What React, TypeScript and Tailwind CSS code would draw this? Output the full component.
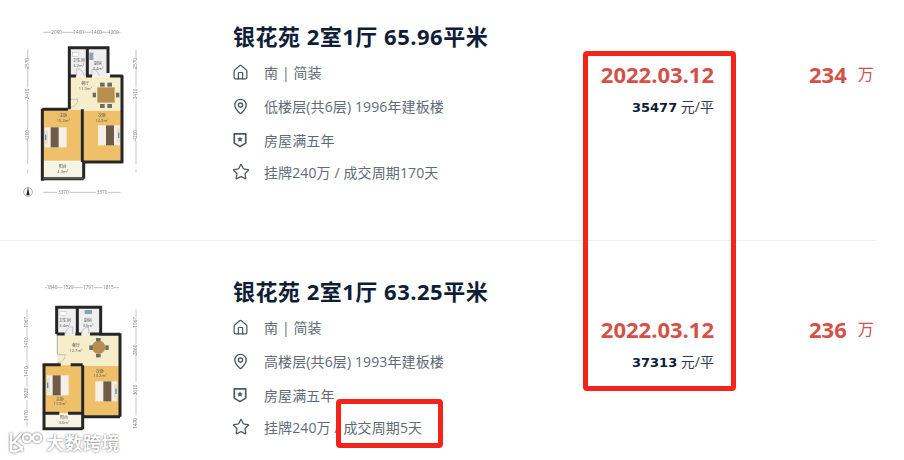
import { Home, MapPin, Star } from "lucide-react";

const SANS = "font-['Open_Sans','Noto_Sans_CJK_SC',sans-serif]";

const Shield = () => (
  <svg viewBox="0 0 16 16" className="size-4 text-[#4d5561]" fill="none">
    <path d="M2.300 1.800h11.400v9.300L8 14.600l-5.700-3.500Z" stroke="currentColor" strokeWidth="1.700" strokeLinejoin="round" />
    <path d="m8 4.500.9 1.800 2 .2-1.500 1.300.4 1.900L8 8.800l-1.800.9.400-1.900-1.500-1.300 2-.2Z" fill="currentColor" />
  </svg>
);

function DimLabel({ x, y, text, vertical }: { x: number; y: number; text: string; vertical?: boolean }) {
  return (
    <text
      x={x}
      y={y}
      fontSize="14"
      fill="#777"
      textAnchor="middle"
      dominantBaseline="middle"
      transform={vertical ? `rotate(-90 ${x} ${y})` : undefined}
    >
      {text}
    </text>
  );
}

function Bed({ x, y, flip }: { x: number; y: number; flip?: boolean }) {
  return (
    <g transform={`translate(${x} ${y})`}>
      <rect width="66" height="60" fill="#f4f0e8" />
      <rect x={flip ? 24 : 18} width="24" height="60" fill="#6f5c48" />
      <rect x={flip ? 56 : 0} y="8" width="10" height="44" fill="#e6e2da" />
      <rect x={flip ? 60 : 1} y="22" width="4" height="16" fill="#5f8fa8" />
    </g>
  );
}

function Table({ x, y }: { x: number; y: number }) {
  return (
    <g transform={`translate(${x} ${y})`}>
      <rect x="14" y="-14" width="14" height="12" fill="#6f6a62" />
      <rect x="36" y="-14" width="14" height="12" fill="#6f6a62" />
      <rect x="14" y="50" width="14" height="12" fill="#6f6a62" />
      <rect x="36" y="50" width="14" height="12" fill="#6f6a62" />
      <rect x="-8" y="16" width="10" height="14" fill="#6f6a62" />
      <rect x="62" y="16" width="10" height="14" fill="#6f6a62" />
      <rect x="6" width="52" height="46" fill="#b78f4e" />
    </g>
  );
}

function PlanA() {
  return (
    <svg viewBox="0 0 690 630" className="h-[210px] w-[230px] shrink-0 blur-[0.4px]">
      <path d="M130 67h22M186 67h36M250 67h26M304 67h26M350 67h12M130 547h42M208 547h80M324 547h38" stroke="#888" strokeWidth="1.500" />
      <path d="M83 118v30M83 172v60M83 270v90M83 392v70M83 480v8M408 118v30M408 172v60M408 270v90M408 392v70M408 480v8" stroke="#888" strokeWidth="1.500" />
      <DimLabel x={170} y={67} text="2090" />
      <DimLabel x={236} y={67} text="1400" />
      <DimLabel x={290} y={67} text="1400" />
      <DimLabel x={340} y={67} text="1200" />
      <DimLabel x={190} y={547} text="3370" />
      <DimLabel x={306} y={547} text="3370" />
      <DimLabel x={83} y={160} text="2570" vertical />
      <DimLabel x={83} y={252} text="2410" vertical />
      <DimLabel x={83} y={376} text="4200" vertical />
      <DimLabel x={408} y={160} text="2570" vertical />
      <DimLabel x={408} y={252} text="2410" vertical />
      <DimLabel x={408} y={376} text="4200" vertical />

      <rect x="208" y="115" width="116" height="85" fill="#efefef" />
      <path d="M210 200h157v102H210Z" fill="#f6eecb" />
      <path d="M127 300h120v152H127ZM252 302h114v154H252Z" fill="#eec06a" />
      <rect x="127" y="455" width="124" height="50" fill="#f6f4e2" />
      <rect x="218" y="128" width="18" height="12" fill="#fff" stroke="#999" />
      <rect x="268" y="128" width="12" height="22" fill="#8aa2ae" />
      <path d="M230 198v-22a22 22 0 0 1 22 22M276 198v-20a22 22 0 0 1 22 20M210 268h24a24 24 0 0 1-24 24" fill="none" stroke="#999" strokeWidth="1.500" />

      <path d="M208 198V113h54v85h-4M262 113h62v76M228 198h-20v-2M208 198v100M204 298h-77M127 296v212h6M127 506h124M251 506v-50M247 298v158M247 456h119M366 196v264M330 198h38M276 198h-14" fill="none" stroke="#262626" strokeWidth="9" />
      <path d="M130 506h120" stroke="#666" strokeWidth="3" />

      <Table x={286} y={232} />
      <Bed x={134} y={352} />
      <Bed x={294} y={346} flip />
      <text x="256" y="226" fontSize="12" fill="#555" textAnchor="middle">餐厅</text>
      <text x="256" y="241" fontSize="12" fill="#555" textAnchor="middle">11.9m²</text>
      <text x="236" y="156" fontSize="12" fill="#555" textAnchor="middle">卫生间</text>
      <text x="236" y="170" fontSize="12" fill="#555" textAnchor="middle">3.2m²</text>
      <text x="294" y="166" fontSize="12" fill="#555" textAnchor="middle">厨房</text>
      <text x="294" y="180" fontSize="12" fill="#555" textAnchor="middle">3.4m²</text>
      <text x="190" y="321" fontSize="12" fill="#555" textAnchor="middle">主卧</text>
      <text x="190" y="335" fontSize="12" fill="#555" textAnchor="middle">15.2m²</text>
      <text x="306" y="321" fontSize="12" fill="#555" textAnchor="middle">次卧</text>
      <text x="306" y="335" fontSize="12" fill="#555" textAnchor="middle">14.3m²</text>
      <text x="188" y="474" fontSize="12" fill="#555" textAnchor="middle">阳台</text>
      <text x="188" y="488" fontSize="12" fill="#555" textAnchor="middle">4.3m²</text>
      <circle cx="84" cy="546" r="13" fill="none" stroke="#555" strokeWidth="1.500" />
      <path d="M84 532 79 556h10Z" fill="#222" />
    </svg>
  );
}

function PlanB() {
  return (
    <svg viewBox="0 0 690 570" className="h-[190px] w-[230px] shrink-0 blur-[0.4px]">
      <DimLabel x={156} y={53} text="1840" />
      <DimLabel x={205} y={53} text="1529" />
      <DimLabel x={265} y={53} text="1791" />
      <DimLabel x={325} y={53} text="1815" />
      <path d="M135 53h6M172 53h16M222 53h26M282 53h26M342 53h15" stroke="#888" strokeWidth="1.500" />
      <path d="M81 118v24M81 172v30M81 232v60M81 320v30M81 390v34M81 450v20M408 118v24M408 172v50M408 256v80M408 376v60M408 450v20" stroke="#888" strokeWidth="1.500" />
      <DimLabel x={81} y={157} text="1967" vertical />
      <DimLabel x={81} y={218} text="1410" vertical />
      <DimLabel x={81} y={305} text="1410" vertical />
      <DimLabel x={81} y={370} text="3928" vertical />
      <DimLabel x={81} y={437} text="1470" vertical />
      <DimLabel x={408} y={157} text="1967" vertical />
      <DimLabel x={408} y={240} text="2860" vertical />
      <DimLabel x={408} y={360} text="3610" vertical />
      <DimLabel x={408} y={460} text="1470" vertical />

      <rect x="170" y="112" width="132" height="82" fill="#efefef" />
      <path d="M172 194h186v94H172Z" fill="#f6eecb" />
      <path d="M132 286h112v144H132ZM248 288h112v150H248Z" fill="#eec06a" />
      <rect x="132" y="430" width="116" height="46" fill="#f6f4e2" />
      <rect x="180" y="124" width="18" height="12" fill="#fff" stroke="#999" />
      <rect x="254" y="120" width="22" height="12" fill="#8aa2ae" />
      <path d="M196 192a22 22 0 0 1 22-22v22M244 192a20 20 0 0 1 22-20v20M172 254h24a24 24 0 0 1-24 24" fill="none" stroke="#999" strokeWidth="1.500" />

      <path d="M170 192v-80h62v78M232 112h70v76M170 192h24M226 192h6M232 192h12M270 192h32M302 188v5h58M360 190v250M360 440H248M248 286v192M248 476H132V284h50M212 284h36M132 430h46M204 430h44" fill="none" stroke="#262626" strokeWidth="9" />
      <path d="M172 194v58" stroke="#888" strokeWidth="2" />

      <circle cx="296" cy="232" r="20" fill="#b78f4e" />
      <rect x="288" y="204" width="14" height="10" fill="#6f6a62" />
      <rect x="288" y="252" width="14" height="10" fill="#6f6a62" />
      <rect x="268" y="226" width="10" height="14" fill="#6f6a62" />
      <rect x="316" y="226" width="10" height="14" fill="#6f6a62" />
      <Bed x={140} y={316} />
      <Bed x={286} y={334} flip />
      <text x="194" y="156" fontSize="12" fill="#555" textAnchor="middle">卫生间</text>
      <text x="194" y="170" fontSize="12" fill="#555" textAnchor="middle">3.4m²</text>
      <text x="264" y="156" fontSize="12" fill="#555" textAnchor="middle">厨房</text>
      <text x="264" y="170" fontSize="12" fill="#555" textAnchor="middle">3.5m²</text>
      <text x="228" y="232" fontSize="12" fill="#555" textAnchor="middle">餐厅</text>
      <text x="228" y="246" fontSize="12" fill="#555" textAnchor="middle">12.7m²</text>
      <text x="180" y="392" fontSize="12" fill="#555" textAnchor="middle">主卧</text>
      <text x="180" y="406" fontSize="12" fill="#555" textAnchor="middle">11.9m²</text>
      <text x="300" y="308" fontSize="12" fill="#555" textAnchor="middle">次卧</text>
      <text x="300" y="322" fontSize="12" fill="#555" textAnchor="middle">13.2m²</text>
      <text x="192" y="448" fontSize="12" fill="#555" textAnchor="middle">阳台</text>
      <text x="192" y="462" fontSize="12" fill="#555" textAnchor="middle">3.6m²</text>
    </svg>
  );
}

type Listing = {
  title: string;
  floor: string;
  deal: string;
  date: string;
  unit: string;
  price: string;
};

function Row({ item, plan, rowClass, planClass }: { item: Listing; plan: React.ReactNode; rowClass: string; planClass: string }) {
  const lines = [
    { icon: <Home className="size-[17px] text-[#4d5561]" strokeWidth={1.7} />, text: "南 | 简装", h: "h-[31px]" },
    { icon: <MapPin className="size-[17px] text-[#4d5561]" strokeWidth={1.9} />, text: item.floor, h: "h-[36px]" },
    { icon: <Shield />, text: "房屋满五年", h: "h-[32px]" },
    { icon: <Star className="size-[18px] text-[#4d5561]" strokeWidth={1.7} />, text: item.deal, h: "h-[32px]" },
  ];

  return (
    <div className={`flex w-[876px] ${rowClass}`}>
      <div className={planClass}>{plan}</div>
      <div className="ml-[3px] w-[340px] shrink-0">
        <h2 className="text-[22px] leading-[30px] font-bold tracking-[0.5px] whitespace-nowrap text-[#101d37]">{item.title}</h2>
        <div className="mt-[6px]">
          {lines.map((line) => (
            <div key={line.text} className={`flex items-center text-[14px] tracking-[0.12px] text-[#616a76] ${line.h}`}>
              <span className="-ml-[1px] flex w-[32px] shrink-0">{line.icon}</span>
              <span className="whitespace-nowrap">{line.text}</span>
            </div>
          ))}
        </div>
      </div>
      <div className="ml-[31px] flex w-[110px] shrink-0 flex-col items-end">
        <div className="mt-[39px] text-[22px] leading-[28px] font-bold whitespace-nowrap text-[#d2524a]">{item.date}</div>
        <div className="mt-[5px] text-[14px] leading-[28px] whitespace-nowrap text-[#2f3a4a]">
          <span className="font-['DejaVu_Sans','Noto_Sans_CJK_SC',sans-serif] text-[13px] font-bold text-[#101d37]">{item.unit}</span> 元/平
        </div>
      </div>
      <div className="mt-[39px] ml-[95px] flex h-[28px] shrink-0 items-center whitespace-nowrap text-[#d2524a]">
        <span className="text-[22px] font-bold">{item.price}</span>
        <span className="ml-[11px] text-[16px]">万</span>
      </div>
    </div>
  );
}

export default function App() {
  return (
    <div className={`relative h-[460px] w-[904px] overflow-hidden bg-white ${SANS}`}>
      <Row
        rowClass="h-[241px] border-b border-[#eeeeee] pt-[21px]"
        planClass="-mt-[11px]"
        plan={<PlanA />}
        item={{
          title: "银花苑 2室1厅 65.96平米",
          floor: "低楼层(共6层) 1996年建板楼",
          deal: "挂牌240万 / 成交周期170天",
          date: "2022.03.12",
          unit: "35477",
          price: "234",
        }}
      />
      <Row
        rowClass="pt-[35px]"
        planClass="-mt-[6px]"
        plan={<PlanB />}
        item={{
          title: "银花苑 2室1厅 63.25平米",
          floor: "高楼层(共6层) 1993年建板楼",
          deal: "挂牌240万 / 成交周期5天",
          date: "2022.03.12",
          unit: "37313",
          price: "236",
        }}
      />

      {/* red annotations drawn over the screenshot */}
      <div className="absolute top-[51px] left-[583px] h-[340px] w-[153px] rounded-[4px] border-[5px] border-[#f5241a]" />
      <div className="absolute top-[399px] left-[336px] h-[49px] w-[107px] rounded-[4px] border-[5px] border-[#f5241a]" />

      {/* watermark */}
      <div className="absolute top-[432px] left-[8px] flex items-center gap-[4px] text-white">
        <svg viewBox="0 0 34 22" className="h-[22px] w-[34px] drop-shadow-[0_0_1px_#555]" fill="none" stroke="#fff" strokeWidth="2.500" strokeLinecap="round">
          <path d="M3 2v16M3 19c4 1 9 0 11-4M5 11l8-9M7 11c3 1 6 4 7 7" />
          <circle cx="19" cy="6" r="4" />
          <circle cx="29" cy="6" r="4" />
        </svg>
        <span className="text-[18px] leading-none font-bold tracking-[0.5px] [text-shadow:0_0_2px_#555]">大数跨境</span>
      </div>
    </div>
  );
}
